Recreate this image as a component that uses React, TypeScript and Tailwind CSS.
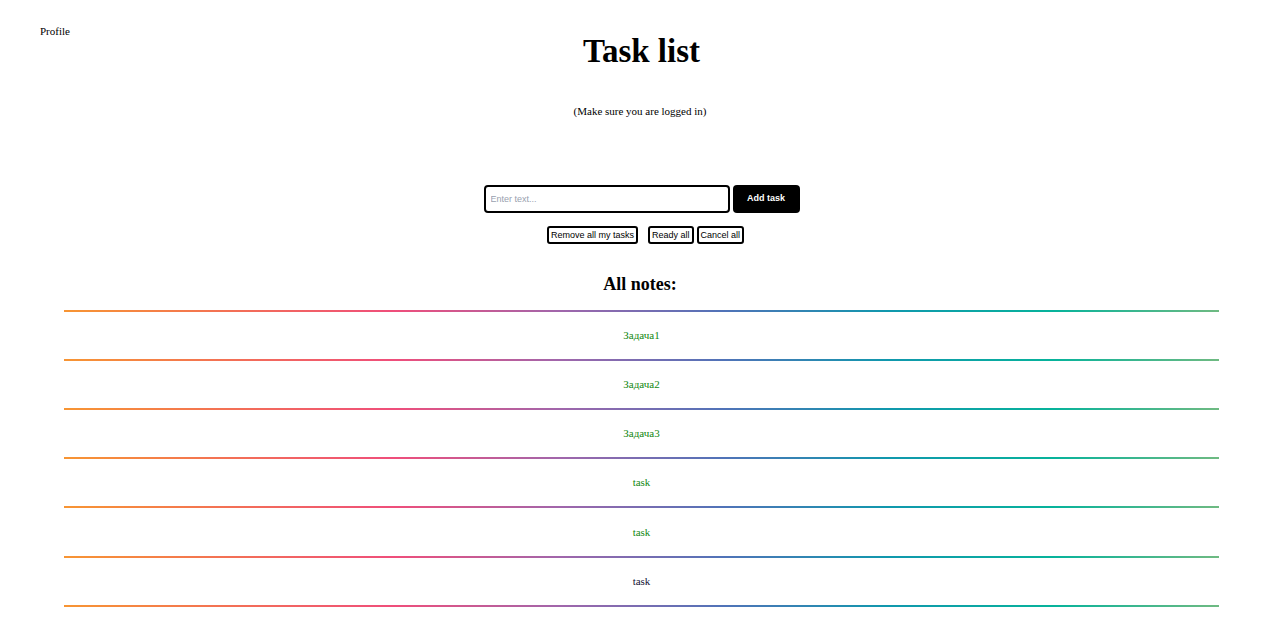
const tasks = [
  { text: 'Задача1', done: true },
  { text: 'Задача2', done: true },
  { text: 'Задача3', done: true },
  { text: 'task', done: true },
  { text: 'task', done: true },
  { text: 'task', done: false },
]

function Divider() {
  return (
    <div className="h-[2px] w-full bg-[linear-gradient(90deg,#f79533,#f37055,#ef4e7b,#a166ab,#5073b8,#1098ad,#07b39b,#6fba82)]" />
  )
}

export default function App() {
  return (
    <div className="min-h-screen bg-white text-black font-['Liberation_Serif',serif]">
      <div className="flex">
        <a className="ml-[40px] mt-[25px] text-[11px] leading-[13px] cursor-pointer">Profile</a>
      </div>

      <h1 className="-mt-[6px] text-center text-[33px] font-bold leading-[39px] pl-[3px]">Task list</h1>

      <p className="mt-[34px] text-center text-[11px] leading-[13px]">(Make sure you are logged in)</p>

      <div className="mt-[67px] flex justify-center gap-[3px] pl-[3px] font-['Liberation_Sans',Arial,sans-serif]">
        <input
          type="text"
          placeholder="Enter text..."
          className="h-[28px] w-[246px] rounded-[4px] border-2 border-black px-[5px] text-[9px] outline-none placeholder:text-gray-400"
        />
        <button className="h-[28px] w-[67px] rounded-[4px] bg-black text-[9px] font-bold text-white">Add task</button>
      </div>

      <div className="mt-[13px] flex justify-center pl-[11px] font-['Liberation_Sans',Arial,sans-serif] text-[9px]">
        <button className="h-[18px] rounded-[3px] border-2 border-black px-[2px] leading-[12px]">Remove all my tasks</button>
        <button className="ml-[10px] h-[18px] rounded-[3px] border-2 border-black px-[2px] leading-[12px]">Ready all</button>
        <button className="ml-[3px] h-[18px] rounded-[3px] border-2 border-black px-[2px] leading-[12px]">Cancel all</button>
      </div>

      <h2 className="mt-[30px] text-center text-[18px] font-bold leading-[21px]">All notes:</h2>

      <div className="mx-[64px] mt-[15px] w-[1155px]">
        <Divider />
        {tasks.map((t, i) => (
          <div key={i}>
            <div
              className={`flex ${i < 3 ? 'h-[47px]' : 'h-[47.4px]'} items-center justify-center text-[11px] ${
                t.done ? 'text-[#118811]' : 'text-[#111133]'
              }`}
            >
              {t.text}
            </div>
            <Divider />
          </div>
        ))}
      </div>
    </div>
  )
}
